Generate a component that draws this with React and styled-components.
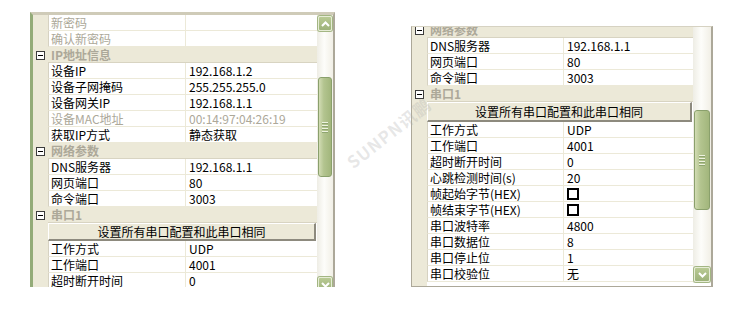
import styled, { createGlobalStyle } from 'styled-components';

const GlobalStyle = createGlobalStyle`
  html, body { margin: 0; padding: 0; background: #fff; }
  body {
    font-family: "Noto Sans CJK SC", "Liberation Sans", sans-serif;
    font-size: 12px;
    color: #000;
  }
`;

const leftRows = [
  { name: '新密码', disabled: true },
  { name: '确认新密码', disabled: true },
  { header: 'IP地址信息' },
  { name: '设备IP', value: '192.168.1.2' },
  { name: '设备子网掩码', value: '255.255.255.0' },
  { name: '设备网关IP', value: '192.168.1.1' },
  { name: '设备MAC地址', value: '00:14:97:04:26:19', disabled: true },
  { name: '获取IP方式', value: '静态获取' },
  { header: '网络参数' },
  { name: 'DNS服务器', value: '192.168.1.1' },
  { name: '网页端口', value: '80' },
  { name: '命令端口', value: '3003' },
  { header: '串口1' },
  { button: '设置所有串口配置和此串口相同' },
  { name: '工作方式', value: 'UDP' },
  { name: '工作端口', value: '4001' },
  { name: '超时断开时间', value: '0' },
];

const rightRows = [
  { header: '网络参数' },
  { name: 'DNS服务器', value: '192.168.1.1' },
  { name: '网页端口', value: '80' },
  { name: '命令端口', value: '3003' },
  { header: '串口1' },
  { button: '设置所有串口配置和此串口相同' },
  { name: '工作方式', value: 'UDP' },
  { name: '工作端口', value: '4001' },
  { name: '超时断开时间', value: '0' },
  { name: '心跳检测时间(s)', value: '20' },
  { name: '帧起始字节(HEX)', check: true },
  { name: '帧结束字节(HEX)', check: true },
  { name: '串口波特率', value: '4800' },
  { name: '串口数据位', value: '8' },
  { name: '串口停止位', value: '1' },
  { name: '串口校验位', value: '无' },
];

function Arrow({ up }) {
  return (
    <svg width="9" height="6" viewBox="0 0 9 6">
      <path
        d={up ? 'M1 5 L4.5 1.5 L8 5' : 'M1 1 L4.5 4.5 L8 1'}
        fill="none"
        stroke="#fff"
        strokeWidth="2"
      />
    </svg>
  );
}

function ScrollBar({ width, showUp, thumbTop, thumbHeight, overflow }) {
  return (
    <Bar $width={width} $overflow={overflow}>
      {showUp && <ArrowBtn><Arrow up /></ArrowBtn>}
      <Track>
        <Thumb style={{ marginTop: thumbTop, height: thumbHeight }}>
          <Grip><i /><i /><i /><i /></Grip>
        </Thumb>
      </Track>
      <ArrowBtn><Arrow /></ArrowBtn>
    </Bar>
  );
}

function PropertyList({ rows }) {
  return rows.map((row, i) => {
    if (row.header) {
      return (
        <Row key={i}>
          <Gutter><Toggle /></Gutter>
          <HeaderCell>{row.header}</HeaderCell>
        </Row>
      );
    }
    if (row.button) {
      return (
        <ButtonRow key={i}>
          <Gutter />
          <ActionButton>{row.button}</ActionButton>
        </ButtonRow>
      );
    }
    return (
      <Row key={i}>
        <Gutter />
        <NameCell $disabled={row.disabled}>{row.name}</NameCell>
        <ValueCell $disabled={row.disabled}>
          {row.check ? <CheckBox /> : row.value}
        </ValueCell>
      </Row>
    );
  });
}

export default function App() {
  return (
    <>
      <GlobalStyle />
      <Page>
        <LeftPanel>
          <Grid $nameWidth={137}>
            <PropertyList rows={leftRows} />
          </Grid>
          <ScrollBar width={16} showUp thumbTop={45} thumbHeight={100} overflow={6} />
        </LeftPanel>
        <RightPanel>
          <Grid $nameWidth={136} $shift={-5}>
            <PropertyList rows={rightRows} />
          </Grid>
          <ScrollBar width={18} thumbTop={83} thumbHeight={100} overflow={-3} />
        </RightPanel>
        <Watermark>SUNPN讯鹏</Watermark>
      </Page>
    </>
  );
}

const Page = styled.div`
  position: relative;
  display: flex;
  align-items: flex-start;
  width: 750px;
  height: 317px;
  padding-left: 30px;
  box-sizing: border-box;
  overflow: hidden;
`;

const LeftPanel = styled.div`
  display: flex;
  width: 305px;
  height: 275px;
  margin-top: 12px;
  box-sizing: border-box;
  border-left: 3px solid #93AB78;
  border-top: 3px solid #CFCBB8;
  border-right: 2px solid #ACA899;
  overflow: hidden;
`;

const RightPanel = styled.div`
  display: flex;
  width: 302px;
  height: 261px;
  margin-top: 26px;
  margin-left: 76px;
  box-sizing: border-box;
  border-left: 1px solid #ACA899;
  border-top: 1px solid #D6D2C2;
  border-right: 2px solid #ACA899;
  border-bottom: 1px solid #ACA899;
  overflow: hidden;
`;

const Grid = styled.div`
  --name-w: ${(p) => p.$nameWidth}px;
  flex: 1;
  display: flex;
  flex-direction: column;
  margin-top: ${(p) => p.$shift || 0}px;
  background: linear-gradient(to right, #ECE9D8 15px, #fff 15px);
`;

const Row = styled.div`
  display: grid;
  grid-template-columns: 15px var(--name-w) 1fr;
  height: 16px;
  line-height: 15px;
`;

const ButtonRow = styled(Row)`
  height: 20px;
  grid-template-columns: 15px 1fr;
`;

const Gutter = styled.div`
  display: flex;
  align-items: center;
  justify-content: center;
  background: #ECE9D8;
`;

const Toggle = styled.span`
  position: relative;
  width: 9px;
  height: 9px;
  box-sizing: border-box;
  border: 1px solid #3C3C3C;
  background: #fff;
  margin-left: -1px;
  &::after {
    content: '';
    position: absolute;
    left: 1px;
    top: 3px;
    width: 5px;
    height: 1px;
    background: #000;
  }
`;

const HeaderCell = styled.div`
  grid-column: 2 / 4;
  background: #ECE9D8;
  border-bottom: 1px solid #D8D4C2;
  padding-left: 3px;
  font-weight: bold;
  color: #ACA899;
  white-space: nowrap;
`;

const NameCell = styled.div`
  border-left: 1px solid #D6D2C2;
  border-bottom: 1px solid #ECE9D8;
  padding-left: 2px;
  white-space: nowrap;
  overflow: hidden;
  color: ${(p) => (p.$disabled ? '#ACA899' : '#000')};
`;

const ValueCell = styled.div`
  display: flex;
  align-items: center;
  border-left: 1px solid #ECE9D8;
  border-bottom: 1px solid #ECE9D8;
  padding-left: 3px;
  white-space: nowrap;
  overflow: hidden;
  color: ${(p) => (p.$disabled ? '#ACA899' : '#000')};
`;

const CheckBox = styled.span`
  width: 12px;
  height: 12px;
  box-sizing: border-box;
  border: 2px solid #000;
  background: #fff;
`;

const ActionButton = styled.div`
  display: flex;
  align-items: center;
  justify-content: center;
  background: #ECE9D8;
  border-top: 1px solid #fff;
  border-left: 1px solid #fff;
  border-right: 2px solid #8D8A7E;
  border-bottom: 2px solid #8D8A7E;
  margin-right: 1px;
  font-size: 12px;
  color: #000;
`;

const Bar = styled.div`
  display: flex;
  flex-direction: column;
  width: ${(p) => p.$width}px;
  flex: none;
  height: calc(100% + ${(p) => p.$overflow}px);
  background: linear-gradient(to right, #EEEDE5, #FDFDFA 45%, #F1EFE6);
`;

const Track = styled.div`
  flex: 1;
  display: flex;
  flex-direction: column;
  align-items: center;
`;

const Thumb = styled.div`
  width: calc(100% - 2px);
  box-sizing: border-box;
  border: 1px solid #8AA06C;
  border-radius: 3px;
  background: linear-gradient(to right, #D2DCB4, #B3C48F 40%, #A2B67C);
  display: flex;
  align-items: center;
  justify-content: center;
`;

const Grip = styled.div`
  display: flex;
  flex-direction: column;
  gap: 1px;
  i {
    display: block;
    width: 6px;
    height: 1px;
    background: #EEF3E0;
    border-bottom: 1px solid #8FA570;
  }
`;

const ArrowBtn = styled.div`
  flex: none;
  height: 15px;
  margin: 1px;
  box-sizing: border-box;
  border: 1px solid #E6ECD6;
  border-radius: 2px;
  background: linear-gradient(#B9CA94, #9DB27A);
  box-shadow: 0 0 0 1px #A3B683;
  display: flex;
  align-items: center;
  justify-content: center;
`;

const Watermark = styled.div`
  position: absolute;
  left: 338px;
  top: 120px;
  transform: rotate(-38deg);
  font-size: 17px;
  font-weight: bold;
  letter-spacing: 1px;
  color: rgba(170, 170, 170, 0.28);
  pointer-events: none;
`;
